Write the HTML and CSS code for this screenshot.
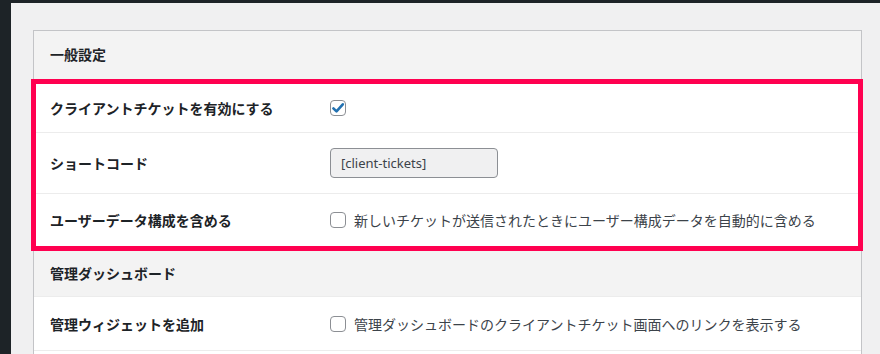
FILE: index.html
```html
<!DOCTYPE html>
<html lang="ja">
<head>
<meta charset="utf-8">
<link rel="stylesheet" href="styles.css">
</head>
<body>
<div class="topbar"></div>
<div class="layout">
  <aside class="sidebar"></aside>
  <main class="content">
    <section class="panel">
      <div class="row section">一般設定</div>
      <div class="highlight">
        <div class="row field first">
          <div class="label">クライアントチケットを有効にする</div>
          <div class="control"><span class="check checked"><svg viewBox="0 0 16 16" width="16" height="16"><path d="M3.4 8.3 L6.5 11.4 L12.8 4.3" fill="none" stroke="#2271b1" stroke-width="2.6" stroke-linecap="round" stroke-linejoin="round"/></svg></span></div>
        </div>
        <div class="row field tall">
          <div class="label">ショートコード</div>
          <div class="control"><span class="input">[client-tickets]</span></div>
        </div>
        <div class="row field last">
          <div class="label">ユーザーデータ構成を含める</div>
          <div class="control"><span class="check"></span><span class="desc">新しいチケットが送信されたときにユーザー構成データを自動的に含める</span></div>
        </div>
      </div>
      <div class="row section second">管理ダッシュボード</div>
      <div class="row field widget">
        <div class="label">管理ウィジェットを追加</div>
        <div class="control"><span class="check"></span><span class="desc">管理ダッシュボードのクライアントチケット画面へのリンクを表示する</span></div>
      </div>
      <div class="row field empty"></div>
    </section>
  </main>
</div>
</body>
</html>
```
FILE: styles.css
```css
* { box-sizing: border-box; }
html, body { margin: 0; padding: 0; height: 100%; overflow: hidden; }
body {
  background: #f0f0f1;
  font-family: "Noto Sans", "Noto Sans CJK JP", sans-serif;
  color: #1d2327;
  font-size: 14px;
}
.topbar { height: 3px; background: #1d2327; }
.layout { display: flex; height: 351px; }
.sidebar { width: 11px; background: #1d2327; flex: none; }
.content { flex: 1; padding: 27px 18px 0 22px; }
.panel {
  border: 1px solid #c3c4c7;
  border-bottom: none;
  background: #fff;
  width: 829px;
}
.row {
  display: flex;
  align-items: center;
  padding-left: 16px;
  border-bottom: 1px solid #ececec;
}
.section {
  height: 48px;
  background: #f3f3f3;
  font-weight: 700;
  font-size: 14px;
  padding-bottom: 2px;
  border-bottom: none;
}
.section.second { height: 46px; border-bottom: 1px solid #ececec; }
.highlight { position: relative; }
.highlight::after {
  content: "";
  position: absolute;
  top: 0; bottom: 0; left: -3px; right: -2px;
  border: 5px solid #ff0050;
  pointer-events: none;
}
.field .label {
  width: 280px;
  flex: none;
  font-weight: 700;
  font-size: 14px;
}
.field .control { display: flex; align-items: center; }
.first { height: 54px; padding-top: 5px; }
.tall { height: 61px; }
.last { height: 57px; padding-bottom: 5px; border-bottom: none; }
.widget { height: 54px; }
.empty { height: 10px; border-bottom: none; }
.check {
  width: 16px; height: 16px;
  border: 1px solid #8c8f94;
  border-radius: 4px;
  background: #fff;
  display: inline-flex;
  align-items: center;
  justify-content: center;
  flex: none;
}
.check svg { display: block; margin: -1px; }
.desc { margin-left: 8px; font-size: 14px; color: #3c434a; font-weight: 400; }
.input {
  display: inline-flex;
  align-items: center;
  width: 168px;
  height: 30px;
  padding: 0 10px;
  border: 1px solid #8c8f94;
  border-radius: 4px;
  background: #f0f0f1;
  color: #3c434a;
  font-size: 13px;
}
```
